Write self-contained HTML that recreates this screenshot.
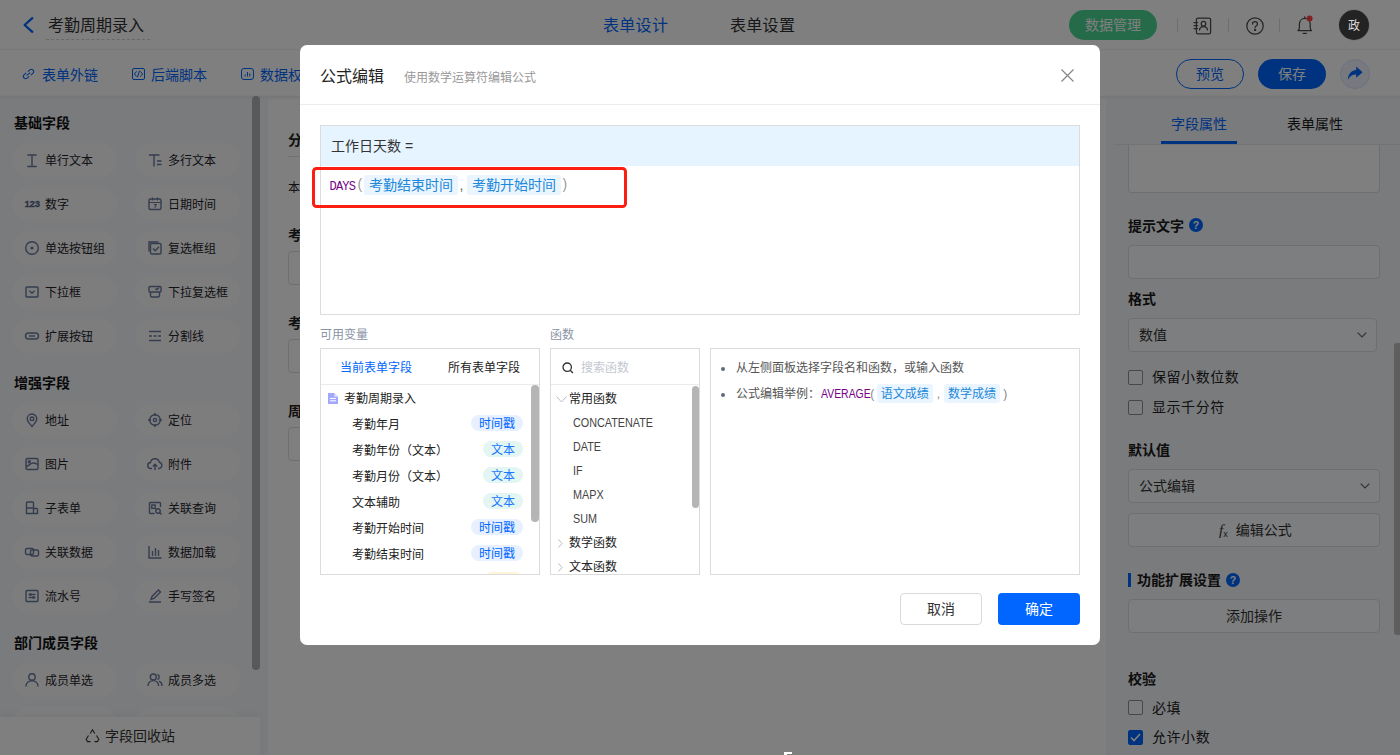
<!DOCTYPE html>
<html lang="zh-CN">
<head>
<meta charset="utf-8">
<title>公式编辑</title>
<style>
*{box-sizing:border-box;margin:0;padding:0}
html,body{width:1400px;height:755px;overflow:hidden;background:#fff}
body{font-family:"Liberation Sans","Noto Sans CJK SC",sans-serif;font-size:14px;color:#1f2d3d;position:relative}
.abs{position:absolute}
.t{position:absolute;white-space:nowrap;line-height:20px;height:20px}
svg{position:absolute;overflow:visible}
/* header */
#hdr{position:absolute;left:0;top:0;width:1400px;height:50px;background:#fff;border-bottom:1px solid #f0f0f0}
#bar{position:absolute;left:0;top:51px;width:1400px;height:44px;background:#fff}
#barshadow{position:absolute;left:0;top:95px;width:1400px;height:6px;background:linear-gradient(#f2f2f2,#fff)}
/* left */
#left{position:absolute;left:0;top:95px;width:268px;height:660px;background:#f4f6fa}
.sec{position:absolute;left:14px;font-weight:bold;font-size:14px;line-height:20px;color:#111}
.pill{position:absolute;width:105px;height:34px;border-radius:17px;background:#fafbfd}
.pill span{position:absolute;left:33px;top:8px;font-size:12px;line-height:20px;color:#1f2329;white-space:nowrap}
.pill svg{left:11.600px;top:8.900px;width:16px;height:16px}
#recycle{position:absolute;left:0;top:622px;width:260px;height:38px;background:#fff;box-shadow:0 -3px 8px rgba(0,0,0,.04)}
/* right */
#right{position:absolute;left:1106px;top:95px;width:294px;height:660px;background:#f4f6fa}
.lbl{position:absolute;left:18px;font-weight:bold;font-size:14px;line-height:20px;color:#1a1a1a;white-space:nowrap}
.box{position:absolute;left:18px;width:251px;height:34px;border:1px solid #dcdfe6;border-radius:4px;background:#fbfcfe}
.cb{position:absolute;left:18px;width:15px;height:15px;border:1px solid #8a90a0;border-radius:2px;background:#fafbfd}
.cbt{position:absolute;left:42px;letter-spacing:0.550px;font-size:14px;line-height:20px;color:#222;white-space:nowrap}
/* overlay */
#mask{position:absolute;left:0;top:0;width:1400px;height:755px;background:rgba(0,0,0,.5)}
/* modal */
#modal{position:absolute;left:300px;top:45px;width:800px;height:600px;background:#fff;border-radius:7px;color:#333}

#modal .sm{position:absolute;white-space:nowrap;font-size:12px;line-height:18px;height:18px}
.pbox{position:absolute;border:1px solid #dcdcdc;background:#fff;overflow:hidden}
.tg{position:absolute;height:16px;border-radius:8px;font-size:12px;line-height:19px;overflow:hidden;text-align:center;white-space:nowrap}
.tg.ts{left:150px;width:52px;background:#e6f0ff;color:#0066ff}
.tg.tx{left:162px;width:40px;background:#e3f6f3;color:#1677ff}
.kw{color:#770088}
.ftag{display:inline-block;background:#ebf5ff;color:#2188d9;border-radius:3px}
</style>
</head>
<body>
<div id="hdr">
<svg style="left:22px;top:16px" width="12" height="18" viewBox="0 0 12 18"><path d="M10.3 2.2 L2.6 9 L10.3 15.8" fill="none" stroke="#0066ff" stroke-width="2.3" stroke-linecap="round" stroke-linejoin="round"/></svg>
<div class="t" style="left:48px;top:16px;font-size:16px;color:#303133">考勤周期录入</div>
<div class="abs" style="left:46px;top:39px;width:104px;height:0;border-top:1px dashed #d0d0d0"></div>
<div class="t" style="left:603px;top:16px;letter-spacing:0.300px;font-size:16px;color:#0066ff">表单设计</div>
<div class="t" style="left:730px;top:16px;letter-spacing:0.300px;font-size:16px;color:#303133">表单设置</div>
<div class="abs" style="left:1069px;top:10px;width:88px;height:30px;border-radius:15px;background:#4ad692;color:#fff;font-size:14px;line-height:30px;text-align:center">数据管理</div>
<div class="abs" style="left:1177px;top:18px;width:1px;height:14px;background:#dcdcdc"></div>
<div class="abs" style="left:1228px;top:18px;width:1px;height:14px;background:#dcdcdc"></div>
<div class="abs" style="left:1279px;top:18px;width:1px;height:14px;background:#dcdcdc"></div>
<svg style="left:1193px;top:16.700px" width="19" height="18" viewBox="0 0 19 18" fill="none" stroke="#4d4d52" stroke-width="1.250"><rect x="3.400" y="1" width="14.200" height="15.800" rx="1.600"/><path d="M1 5.600h3.600M1 8.600h3.600M1 11.600h3.600" stroke-linecap="round"/><circle cx="10.500" cy="6.700" r="2.300"/><path d="M6.500 13.400c0-2.500 1.800-3.900 4-3.900s4 1.400 4 3.900"/></svg>
<svg style="left:1246px;top:16.500px" width="18" height="18" viewBox="0 0 18 18" fill="none" stroke="#4d4d52" stroke-width="1.250"><circle cx="9" cy="9" r="8.200"/><path d="M6.500 7.100c0-1.600 1.100-2.500 2.500-2.500s2.500 0.900 2.500 2.300c0 1.700-2.400 1.900-2.400 3.700" stroke-linecap="round"/><circle cx="9.100" cy="12.900" r="0.550" fill="#4d4d52"/></svg>
<svg style="left:1295.700px;top:15.100px" width="18" height="20" viewBox="0 0 18 20" fill="none" stroke="#4d4d52" stroke-width="1.250"><path d="M2 15.700c1-0.800 1.400-1.800 1.400-3.200V9.200c0-3.300 2.300-5.800 5.400-5.800s5.400 2.500 5.400 5.800v3.300c0 1.400 0.400 2.400 1.400 3.200z" stroke-linejoin="round"/><path d="M7.200 18.300h3.200" stroke-linecap="round"/><path d="M8.800 3.200V1.800" stroke-linecap="round"/><circle cx="13.600" cy="3.400" r="3" fill="#ff4545" stroke="none"/></svg>
<div class="abs" style="left:1339px;top:10px;width:30px;height:30px;border-radius:15px;background:#464646;box-shadow:0 0 0 1px #eef1f8"></div>
</div>
<div id="bar">
<div class="t" style="left:42px;top:13.600px;font-size:14px;color:#0066ff">表单外链</div>
<div class="t" style="left:151px;top:13.600px;font-size:14px;color:#0066ff">后端脚本</div>
<div class="t" style="left:260px;top:13.600px;font-size:14px;color:#0066ff">数据权限</div>
<svg style="left:22px;top:17px" width="13" height="12" viewBox="0 0 13 12" fill="none" stroke="#0066ff" stroke-width="1"><g transform="rotate(-40 6.500 6)"><path d="M5.400 8.300h-2.600a2.300 2.300 0 0 1 0-4.600h2.600"/><path d="M7.600 3.700h2.600a2.300 2.300 0 0 1 0 4.600h-2.600"/><path d="M4.200 6h4.600"/></g></svg>
<svg style="left:131.500px;top:17px" width="13" height="12" viewBox="0 0 13 12" fill="none" stroke="#0066ff" stroke-width="1"><rect x="0.500" y="0.500" width="12" height="11" rx="1.500"/><path d="M4.600 3.400 L2.400 6 L4.600 8.600M8.400 3.400 L10.600 6 L8.400 8.600M7.500 2.800 L5.500 9.200"/></svg>
<svg style="left:240.500px;top:17px" width="13" height="12" viewBox="0 0 13 12" fill="none" stroke="#0066ff" stroke-width="1"><rect x="0.500" y="0.500" width="12" height="11" rx="2.500"/><path d="M4.200 8.500V6.500M6.500 8.500V4M8.800 8.500V5.500"/></svg>
<div class="abs" style="left:1176px;top:8px;width:68px;height:30px;border-radius:15px;border:1px solid #0066ff;color:#0066ff;font-size:14px;line-height:28px;text-align:center">预览</div>
<div class="abs" style="left:1258px;top:8px;width:68px;height:30px;border-radius:15px;background:#0066ff;color:#fff;font-size:14px;line-height:30px;text-align:center">保存</div>
<div class="abs" style="left:1340px;top:8px;width:30px;height:30px;border-radius:15px;background:#eef3ff;border:1px solid #d6e2ff"></div>
<svg style="left:1347px;top:15px" width="16" height="15" viewBox="0 0 16 15"><path d="M9.200 0.600 L15.600 6.200 L9.200 11.800 V8.400 C5.400 8.400 2.600 10 0.800 13.800 C1 8.400 4.200 4.400 9.200 4 Z" fill="#0066ff"/></svg>
</div>
<div id="barshadow"></div>
<div id="left">
<div class="sec" style="top:18px">基础字段</div>
<div class="pill" style="left:12px;top:48px"><svg viewBox="0 0 16 16" fill="none" stroke="#6a789c" stroke-width="1.4"><path d="M3.300 3h9.400M3.300 14.500h9.400M8 3v11.500"/></svg><span>单行文本</span></div>
<div class="pill" style="left:135px;top:48px"><svg viewBox="0 0 16 16" fill="none" stroke="#6a789c" stroke-width="1.4"><path d="M2 3h10.500M7 3v11.500M10 9h4.500M10 12.500h4.500"/></svg><span>多行文本</span></div>
<div class="pill" style="left:12px;top:92px"><b style="position:absolute;left:12.500px;top:12px;font-size:9.500px;line-height:10px;color:#5a6788;-webkit-text-stroke:0.300px #5a6788;letter-spacing:-0.200px">123</b><span>数字</span></div>
<div class="pill" style="left:135px;top:92px"><svg viewBox="0 0 16 16" fill="none" stroke="#6a789c" stroke-width="1.4"><rect x="2" y="3" width="12" height="10.500" rx="1.500"/><path d="M2 6.500h12M5.500 1.500v3M10.500 1.500v3M6.800 8.500h2.400l-1.400 3.200" stroke-width="1.100"/></svg><span>日期时间</span></div>
<div class="pill" style="left:12px;top:136px"><svg viewBox="0 0 16 16" fill="none" stroke="#6a789c" stroke-width="1.4"><circle cx="8" cy="8" r="6.300"/><circle cx="8" cy="8" r="1.600" fill="#6a789c" stroke="none"/></svg><span>单选按钮组</span></div>
<div class="pill" style="left:135px;top:136px"><svg viewBox="0 0 16 16" fill="none" stroke="#6a789c" stroke-width="1.4"><rect x="3.500" y="3.500" width="10.500" height="10.500" rx="1.200"/><path d="M2 11.500v-9.500h9.500"/><path d="M6 8.500l2.200 2.200 3.800-4"/></svg><span>复选框组</span></div>
<div class="pill" style="left:12px;top:180px"><svg viewBox="0 0 16 16" fill="none" stroke="#6a789c" stroke-width="1.4"><rect x="2" y="3" width="12" height="10" rx="1"/><path d="M5.500 6.800l2.500 2.400 2.500-2.400"/></svg><span>下拉框</span></div>
<div class="pill" style="left:135px;top:180px"><svg viewBox="0 0 16 16" fill="none" stroke="#6a789c" stroke-width="1.4"><rect x="2" y="2.500" width="12" height="5.500" rx="1"/><path d="M8.500 4.500l1.300 1.300 2.200-2.300M3.500 8v3.500a1.500 1.500 0 0 0 1.500 1.500h6a1.500 1.500 0 0 0 1.500-1.500v-3.500"/></svg><span>下拉复选框</span></div>
<div class="pill" style="left:12px;top:224px"><svg viewBox="0 0 16 16" fill="none" stroke="#6a789c" stroke-width="1.4"><rect x="1.500" y="5" width="13" height="6" rx="3"/><path d="M5 8h6"/></svg><span>扩展按钮</span></div>
<div class="pill" style="left:135px;top:224px"><svg viewBox="0 0 16 16" fill="none" stroke="#6a789c" stroke-width="1.4"><path d="M2 3.500h12M2 8h3M6.500 8h3M11 8h3M2 12.500h12"/></svg><span>分割线</span></div>
<div class="sec" style="top:278px">增强字段</div>
<div class="pill" style="left:12px;top:308px"><svg viewBox="0 0 16 16" fill="none" stroke="#6a789c" stroke-width="1.4"><path d="M8 14.500c-3-3.200-4.800-5.400-4.800-7.700a4.800 4.800 0 0 1 9.600 0c0 2.300-1.800 4.500-4.800 7.700z"/><circle cx="8" cy="6.800" r="1.800"/></svg><span>地址</span></div>
<div class="pill" style="left:135px;top:308px"><svg viewBox="0 0 16 16" fill="none" stroke="#6a789c" stroke-width="1.4"><circle cx="8" cy="8" r="5.300"/><circle cx="8" cy="8" r="1.600"/><path d="M8 1v3M8 12v3M1 8h3M12 8h3"/></svg><span>定位</span></div>
<div class="pill" style="left:12px;top:352px"><svg viewBox="0 0 16 16" fill="none" stroke="#6a789c" stroke-width="1.4"><rect x="2" y="2.500" width="12" height="11" rx="1.500"/><circle cx="5.300" cy="5.800" r="1" /><path d="M2 10.500c3-.5 4.500-3.500 7-3.500 2 0 3.500.8 5 1.500"/></svg><span>图片</span></div>
<div class="pill" style="left:135px;top:352px"><svg viewBox="0 0 16 16" fill="none" stroke="#6a789c" stroke-width="1.4"><path d="M5 12.500h-1a3 3 0 0 1-.5-6 4.500 4.500 0 0 1 8.800-.3 3.200 3.200 0 0 1-.3 6.300h-1"/><path d="M8 14v-5.500M5.800 10.500l2.200-2.200 2.200 2.200"/></svg><span>附件</span></div>
<div class="pill" style="left:12px;top:396px"><svg viewBox="0 0 16 16" fill="none" stroke="#6a789c" stroke-width="1.4"><path d="M2.500 13.500v-10.500a1 1 0 0 1 1-1h5a1 1 0 0 1 1 1v10.500zM2.500 8h7M9.500 8.500h3a1 1 0 0 1 1 1v4h-4"/></svg><span>子表单</span></div>
<div class="pill" style="left:135px;top:396px"><svg viewBox="0 0 16 16" fill="none" stroke="#6a789c" stroke-width="1.4"><path d="M13.500 7v-3.500a1 1 0 0 0-1-1h-9a1 1 0 0 0-1 1v9a1 1 0 0 0 1 1h4"/><rect x="4.800" y="5" width="3.400" height="3.400"/><circle cx="11" cy="11" r="2.200"/><path d="M12.600 12.600l1.800 1.800"/></svg><span>关联查询</span></div>
<div class="pill" style="left:12px;top:440px"><svg viewBox="0 0 16 16" fill="none" stroke="#6a789c" stroke-width="1.4"><rect x="1.500" y="4.500" width="8" height="6" rx="1.500"/><rect x="6.500" y="6" width="8" height="6" rx="1.500"/></svg><span>关联数据</span></div>
<div class="pill" style="left:135px;top:440px"><svg viewBox="0 0 16 16" fill="none" stroke="#6a789c" stroke-width="1.4"><path d="M2 2v12h12.500M5.500 12v-5M8.500 12v-8M11.500 12v-6"/></svg><span>数据加载</span></div>
<div class="pill" style="left:12px;top:484px"><svg viewBox="0 0 16 16" fill="none" stroke="#6a789c" stroke-width="1.4"><rect x="2" y="2.500" width="12" height="11" rx="1"/><path d="M4.500 6.500h7M4.500 9.500h7M6.500 5v3M9.500 8v3"/></svg><span>流水号</span></div>
<div class="pill" style="left:135px;top:484px"><svg viewBox="0 0 16 16" fill="none" stroke="#6a789c" stroke-width="1.4"><path d="M2 14h12M4 11.500l1-3 6.500-6.500 2 2-6.500 6.500z"/></svg><span>手写签名</span></div>
<div class="sec" style="top:538px">部门成员字段</div>
<div class="pill" style="left:12px;top:568px"><svg viewBox="0 0 16 16" fill="none" stroke="#6a789c" stroke-width="1.4"><circle cx="8" cy="5" r="3.200"/><path d="M2 14.500c0-3.500 2.700-5.800 6-5.800s6 2.300 6 5.800"/></svg><span>成员单选</span></div>
<div class="pill" style="left:135px;top:568px"><svg viewBox="0 0 16 16" fill="none" stroke="#6a789c" stroke-width="1.4"><circle cx="6.300" cy="5" r="3"/><path d="M1 14c0-3.200 2.300-5.400 5.300-5.400s5.300 2.200 5.300 5.400"/><path d="M10.500 2.300a3 3 0 0 1 0 5.400M12 9.200c1.800.8 3 2.500 3 4.800"/></svg><span>成员多选</span></div>
<div class="pill" style="left:12px;top:612px"><span>部门单选</span></div>
<div class="pill" style="left:135px;top:612px"><span>部门多选</span></div>
<div class="abs" style="left:252px;top:1px;width:8px;height:574px;border-radius:4px;background:#b3b3b3"></div>
<div id="recycle"><svg style="left:85px;top:12px" width="15" height="14" viewBox="0 0 15 14" fill="none" stroke="#333" stroke-width="1.100"><path d="M5.200 4.500l2.300-3.700 2.300 3.700M11.500 6.500l2.300 3.800-1.300 2.300h-3M5.500 12.600h-3l-1.300-2.300 2.300-3.800"/></svg><div class="t" style="left:105px;top:9px;font-size:14px;color:#333">字段回收站</div></div>
</div>
<div id="right">
<div class="t" style="left:65px;top:19px;font-size:14px;color:#0066ff">字段属性</div>
<div class="t" style="left:181px;top:19px;font-size:14px;color:#1a1a1a">表单属性</div>
<div class="abs" style="left:8px;top:49px;width:286px;height:1px;background:#e6e6e6"></div>
<div class="abs" style="left:55px;top:46px;width:76px;height:3px;background:#0066ff"></div>
<div class="abs" style="left:22px;top:50px;width:252px;height:48px;border:1px solid #dcdfe6;border-top:none;border-radius:0 0 4px 4px;background:#fff"></div>
<div class="lbl" style="left:22px;top:121px">提示文字</div><svg style="left:83px;top:123px" width="14" height="14" viewBox="0 0 14 14"><circle cx="7" cy="7" r="7" fill="#0066ff"/><text x="7" y="10.800" font-size="10.500" font-weight="bold" fill="#fff" text-anchor="middle" font-family="Liberation Sans,sans-serif">?</text></svg>
<div class="box" style="left:22px;top:150px;width:252px"></div>
<div class="lbl" style="left:22px;top:194px">格式</div>
<div class="box" style="left:22px;top:223px;width:249px"><div class="t" style="left:10px;top:6px;color:#333">数值</div><svg style="left:228px;top:13px" width="10" height="6" viewBox="0 0 10 6" fill="none" stroke="#666" stroke-width="1.200"><path d="M0.700 0.700l4.300 4.300 4.300-4.300"/></svg></div>
<div class="cb" style="left:22px;top:275px"></div><div class="cbt" style="left:46px;top:272px">保留小数位数</div>
<div class="cb" style="left:22px;top:305px"></div><div class="cbt" style="left:46px;top:302px">显示千分符</div>
<div class="lbl" style="left:22px;top:345px">默认值</div>
<div class="box" style="left:22px;top:374px;width:252px"><div class="t" style="left:10px;top:6px;color:#333">公式编辑</div><svg style="left:231px;top:13px" width="10" height="6" viewBox="0 0 10 6" fill="none" stroke="#666" stroke-width="1.200"><path d="M0.700 0.700l4.300 4.300 4.300-4.300"/></svg></div>
<div class="box" style="left:22px;top:418px;width:252px"><div class="t" style="left:90px;top:6px;color:#333"><i style="font-family:'Liberation Serif',serif;font-size:15px">f</i><span style="font-size:9px;vertical-align:-2px">x</span><span style="margin-left:8px">编辑公式</span></div></div>
<div class="abs" style="left:22px;top:478px;width:3px;height:14px;background:#0066ff"></div>
<div class="lbl" style="left:31px;top:475px">功能扩展设置</div><svg style="left:120px;top:478px" width="14" height="14" viewBox="0 0 14 14"><circle cx="7" cy="7" r="7" fill="#0066ff"/><text x="7" y="10.800" font-size="10.500" font-weight="bold" fill="#fff" text-anchor="middle" font-family="Liberation Sans,sans-serif">?</text></svg>
<div class="box" style="left:22px;top:504px;width:252px;text-align:center;line-height:32px;color:#333">添加操作</div>
<div class="lbl" style="left:22px;top:574px">校验</div>
<div class="cb" style="left:22px;top:605px"></div><div class="cbt" style="left:46px;top:603px">必填</div>
<div class="cb" style="left:22px;top:635px;background:#0066ff;border-color:#0066ff"><svg style="left:1px;top:2px" width="11" height="9" viewBox="0 0 11 9" fill="none" stroke="#fff" stroke-width="1.600"><path d="M1 4.500l3 3 6-6.500"/></svg></div><div class="cbt" style="left:46px;top:632px">允许小数</div>
<div class="abs" style="left:288px;top:248px;width:6px;height:292px;border-radius:3px 0 0 3px;background:#bdbdbd"></div>
</div>
<div id="canvas" class="abs" style="left:268px;top:95px;width:838px;height:660px;overflow:hidden">
<div class="t" style="left:20px;top:35px;font-size:14px;font-weight:bold;color:#222">分组标题</div>
<div class="abs" style="left:20px;top:61px;width:798px;height:1px;background:#e4e4e4"></div>
<div class="t" style="left:20px;top:82.500px;font-size:12px;color:#222">本表用于录入考勤周期</div>
<div class="t" style="left:20px;top:130px;font-size:14px;font-weight:bold;color:#222">考勤开始时间</div>
<div class="abs" style="left:20px;top:156px;width:380px;height:34px;border:1px solid #dcdfe6;border-radius:4px"></div>
<div class="t" style="left:20px;top:218px;font-size:14px;font-weight:bold;color:#222">考勤结束时间</div>
<div class="abs" style="left:20px;top:244px;width:380px;height:34px;border:1px solid #dcdfe6;border-radius:4px"></div>
<div class="t" style="left:20px;top:306px;font-size:14px;font-weight:bold;color:#222">周期天数</div>
<div class="abs" style="left:20px;top:332px;width:380px;height:34px;border:1px solid #dcdfe6;border-radius:4px"></div>
</div>
<div class="abs" style="left:784px;top:752px;width:8px;height:2px;background:#fff;z-index:5"></div>
<div class="abs" style="left:784px;top:752px;width:3px;height:3px;background:#fff;z-index:5"></div>
<div class="abs" style="left:0;top:95px;width:1400px;height:1px;background:#f9f9f9"></div>
<div class="abs" style="left:0;top:96px;width:1400px;height:4px;background:linear-gradient(rgba(0,0,0,.035),rgba(0,0,0,0))"></div>
<div id="mask"></div>
<div class="abs" style="left:1339px;top:10px;width:30px;height:30px;color:#dadada;font-size:12px;line-height:32.500px;text-align:center">政</div>
<div id="modal">
<div class="t" style="left:20px;top:21.500px;font-size:16px;color:#222">公式编辑</div>
<div class="sm" style="left:104px;top:23.500px;color:#999">使用数学运算符编辑公式</div>
<svg style="left:761px;top:24px" width="13" height="13" viewBox="0 0 13 13" fill="none" stroke="#858585" stroke-width="1.150"><path d="M0.500 0.500l12 12M12.500 0.500l-12 12"/></svg>
<div class="abs" style="left:0;top:59px;width:800px;height:1px;background:#ececec"></div>
<div class="pbox" style="left:20px;top:80px;width:760px;height:190px;overflow:visible">
<div class="abs" style="left:0;top:0;width:758px;height:40px;background:#e6f4ff"></div>
<div class="t" style="left:10px;top:10px;font-size:14px;color:#333">工作日天数 =</div>
<div class="abs" style="left:0;top:49px;height:20px;line-height:20px;white-space:nowrap;font-size:14px;color:#999"><span class="kw abs" style="left:8.500px;top:2px;font-family:'Liberation Mono',monospace;font-size:12px;letter-spacing:-0.800px">DAYS</span><span class="abs" style="left:36.5px;top:-1px">(</span><span class="ftag abs" style="left:43.2px;top:0;width:93.600px;text-align:center;height:20px">考勤结束时间</span><span class="abs" style="left:138.500px;top:0;color:#666">,</span><span class="ftag abs" style="left:146.3px;top:0;width:93.600px;text-align:center;height:20px">考勤开始时间</span><span class="abs" style="left:241.5px;top:-1px">)</span></div>
<div class="abs" style="left:-9px;top:41px;width:315px;height:41px;border:3px solid #fb1f12;border-radius:4.500px"></div>
</div>
<div class="sm" style="left:20px;top:281px;color:#8a94a6">可用变量</div>
<div class="sm" style="left:250px;top:281px;color:#8a94a6">函数</div>
<div class="pbox" style="left:20px;top:303px;width:220px;height:227px">
<div class="sm" style="left:19px;top:9.500px;color:#0066ff">当前表单字段</div>
<div class="sm" style="left:127px;top:9.500px;color:#222">所有表单字段</div>
<div class="abs" style="left:0;top:35px;width:220px;height:1px;background:#ebebeb"></div>
<svg style="left:7px;top:44px" width="10" height="11" viewBox="0 0 10 11"><path d="M0 0h6.300l3.700 3.700v7.300h-10z" fill="#a3a8ff"/><path d="M2 5.400h6M2 7.800h6" stroke="#fff" stroke-width="1"/><path d="M6.300 0v3.700h3.700z" fill="#dfe2ff"/></svg>
<div class="sm" style="left:23px;top:41px;color:#222">考勤周期录入</div>
<div class="sm" style="left:31px;top:67px;color:#222">考勤年月</div><div class="tg ts" style="top:66px">时间戳</div>
<div class="sm" style="left:31px;top:93px;color:#222">考勤年份（文本）</div><div class="tg tx" style="top:92px">文本</div>
<div class="sm" style="left:31px;top:119px;color:#222">考勤月份（文本）</div><div class="tg tx" style="top:118px">文本</div>
<div class="sm" style="left:31px;top:145px;color:#222">文本辅助</div><div class="tg tx" style="top:144px">文本</div>
<div class="sm" style="left:31px;top:171px;color:#222">考勤开始时间</div><div class="tg ts" style="top:170px">时间戳</div>
<div class="sm" style="left:31px;top:197px;color:#222">考勤结束时间</div><div class="tg ts" style="top:196px">时间戳</div>
<div class="tg" style="left:163px;width:39px;top:223px;background:#fff3d9;color:#f5a623">数字</div>
<div class="abs" style="left:210px;top:36px;width:8px;height:137px;border-radius:4px;background:#b5b5b5"></div>
</div>
<div class="pbox" style="left:250px;top:303px;width:150px;height:227px">
<svg style="left:11px;top:13px" width="12" height="12" viewBox="0 0 12 12" fill="none" stroke="#333" stroke-width="1.300"><circle cx="5.200" cy="5.200" r="4.200"/><path d="M8.200 8.200l2.800 2.800"/></svg>
<div class="sm" style="left:30px;top:9.500px;color:#c3c7cf">搜索函数</div>
<div class="abs" style="left:0;top:35px;width:150px;height:1px;background:#ebebeb"></div>
<svg style="left:5px;top:47px" width="11" height="7" viewBox="0 0 11 7" fill="none" stroke="#b8bcc4" stroke-width="1"><path d="M0.500 0.500l5 5.500 5-5.500"/></svg>
<div class="sm" style="left:18px;top:41px;color:#222">常用函数</div>
<div class="sm" style="left:22px;top:65px;color:#444;transform:scaleX(0.900);transform-origin:0 0">CONCATENATE</div>
<div class="sm" style="left:22px;top:89px;color:#444;transform:scaleX(0.900);transform-origin:0 0">DATE</div>
<div class="sm" style="left:22px;top:113px;color:#444;transform:scaleX(0.900);transform-origin:0 0">IF</div>
<div class="sm" style="left:22px;top:137px;color:#444;transform:scaleX(0.900);transform-origin:0 0">MAPX</div>
<div class="sm" style="left:22px;top:161px;color:#444;transform:scaleX(0.900);transform-origin:0 0">SUM</div>
<div class="sm" style="left:18px;top:185px;color:#222">数学函数</div>
<div class="sm" style="left:18px;top:209px;color:#222">文本函数</div>
<svg style="left:7px;top:189.5px" width="5" height="9" viewBox="0 0 5 9" fill="none" stroke="#b8bcc4" stroke-width="1"><path d="M0.500 0.500l3.500 4-3.500 4"/></svg>
<svg style="left:7px;top:213.5px" width="5" height="9" viewBox="0 0 5 9" fill="none" stroke="#b8bcc4" stroke-width="1"><path d="M0.500 0.500l3.500 4-3.500 4"/></svg>
<div class="abs" style="left:141px;top:37px;width:7px;height:122px;border-radius:4px;background:#b5b5b5"></div>
</div>
<div class="pbox" style="left:410px;top:303px;width:370px;height:227px">
<div class="abs" style="left:10px;top:18px;width:4px;height:4px;border-radius:2px;background:#606a7a"></div>
<div class="abs" style="left:10px;top:44px;width:4px;height:4px;border-radius:2px;background:#606a7a"></div>
<div class="sm" style="left:25px;top:10px;color:#555">从左侧面板选择字段名和函数，或输入函数</div>
<div class="sm" style="left:25px;top:36px;color:#555">公式编辑举例：</div><div class="sm kw" style="left:109.9px;top:36px;transform:scaleX(0.870);transform-origin:0 0">AVERAGE</div><div class="sm" style="left:159.3px;top:35.500px;color:#888">(</div><div class="sm ftag" style="left:165.8px;top:35px;width:56px;height:19px;line-height:20.500px;text-align:center;overflow:hidden">语文成绩</div><div class="sm" style="left:225.8px;top:36px;color:#888">,</div><div class="sm ftag" style="left:232.9px;top:35px;width:56px;height:19px;line-height:20.500px;text-align:center;overflow:hidden">数学成绩</div><div class="sm" style="left:292.2px;top:35.500px;color:#888">)</div>
</div>
<div class="abs" style="left:600px;top:548px;width:82px;height:32px;border:1px solid #d9d9d9;border-radius:4px;text-align:center;line-height:30px;font-size:14px;color:#333">取消</div>
<div class="abs" style="left:698px;top:548px;width:82px;height:32px;background:#0066ff;border-radius:4px;text-align:center;line-height:32px;font-size:14px;color:#fff">确定</div>
</div>
</body>
</html>
